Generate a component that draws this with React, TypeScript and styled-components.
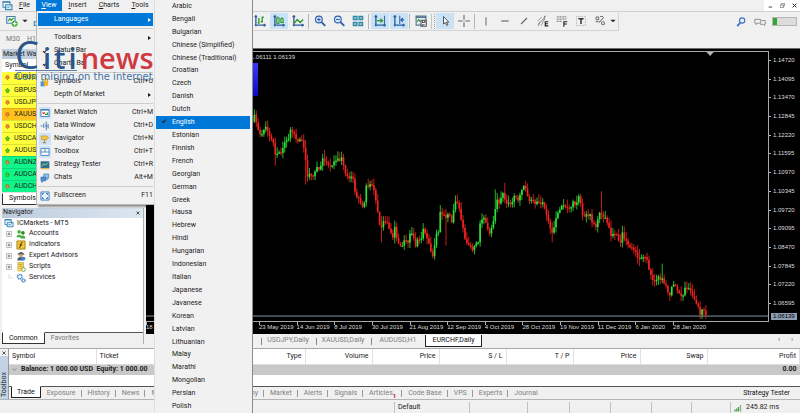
import React from "react";
import styled, { createGlobalStyle, css } from "styled-components";

const UI = `Roboto, "Open Sans", sans-serif`;
const TICK = `"Liberation Sans Narrow", "Liberation Sans", sans-serif`;

const Global = createGlobalStyle`
  *, *::before, *::after { box-sizing: border-box; }
  body { margin: 0; background: #f0f0f0; font: 7px/9px ${UI}; color: #1b1b1b; overflow: hidden; }
  button, input { font: inherit; color: inherit; }
  ul { list-style: none; margin: 0; padding: 0; }
`;

const plainButton = css`
  border: 0;
  margin: 0;
  padding: 0;
  background: transparent;
`;

const Window = styled.div`
  position: relative;
  min-height: 100vh;
  display: flex;
  flex-direction: column;
`;

/* ---------- menu bar ---------- */
const MenuBar = styled.nav`
  display: flex;
  align-items: stretch;
  height: 12px;
  padding-left: 2px;
  border-bottom: 1px solid #cfcfcf;
`;
const AppIcon = styled.span`
  width: 11px;
  height: 11px;
  svg { display: block; width: 11px; height: 11px; }
`;
const MenuButton = styled.button<{ $active?: boolean; $width: number }>`
  ${plainButton}
  width: ${(p) => p.$width}px;
  background: ${(p) => (p.$active ? "#0078d7" : "transparent")};
  color: ${(p) => (p.$active ? "#fff" : "#1b1b1b")};
  &::first-letter { text-decoration: underline; }
`;
const WindowControls = styled.div`
  display: flex;
  margin-left: auto;
  background: #fff;
`;
const WindowControl = styled.button`
  ${plainButton}
  width: 12px;
  display: grid;
  place-items: center;
  svg { width: 5px; height: 5px; }
`;

/* ---------- tool bars ---------- */
const ToolBar = styled.div`
  display: flex;
  align-items: center;
  height: 19px;
  padding-right: 3px;
`;
const ToolGroup = styled.div<{ $width?: number }>`
  display: flex;
  align-items: center;
  gap: 1px;
  height: 18px;
  border-bottom: 1px solid #d4d4d4;
  ${(p) => (p.$width ? `width: ${p.$width}px; padding-left: 3px;` : "border-right: 1px solid #d4d4d4; padding-right: 2px;")}
`;
const ToolButton = styled.button<{ $on?: boolean; $narrow?: boolean }>`
  ${plainButton}
  width: ${(p) => (p.$narrow ? 6 : 18)}px;
  height: 16px;
  display: grid;
  place-items: center;
  background: ${(p) => (p.$on ? "#c9e2f6" : "transparent")};
  svg { width: ${(p) => (p.$narrow ? 6 : 12)}px; height: ${(p) => (p.$narrow ? 6 : 12)}px; }
`;
const ToolSep = styled.span`
  width: 2px;
  height: 15px;
  border-left: 1px solid #b4b4b4;
`;
const Grip = styled.span`
  width: 4px;
  height: 15px;
  border-left: 1px solid #c4c4c4;
  border-right: 1px dotted #9c9c9c;
`;
const ToolRight = styled.div`
  display: flex;
  align-items: center;
  margin-left: auto;
  gap: 1px;
`;
const Meter = styled.div`
  width: 25px;
  height: 9px;
  margin-left: 2px;
  border: 1px solid #b5b5b5;
  background: linear-gradient(90deg, #2fa836 0 4px, #dcdcdc 4px);
`;
const PeriodBar = styled.div`
  display: flex;
  align-items: center;
  height: 17px;
  padding-left: 6px;
  color: #777;
`;
const Period = styled.button`
  ${plainButton}
  width: 21px;
  text-align: left;
`;

/* ---------- work area ---------- */
const Work = styled.main`
  flex: 1;
  display: grid;
  grid-template-columns: 144px 1fr;
  column-gap: 2px;
  min-height: 0;
`;
const Side = styled.div`
  display: flex;
  flex-direction: column;
  padding: 1px 0 4px 2px;
`;
const PanelTitle = styled.h2`
  display: flex;
  justify-content: space-between;
  align-items: center;
  margin: 0;
  padding: 0 2px 0 1px;
  height: 10px;
  font: inherit;
  background: linear-gradient(90deg, #bccbdc, #dde7f2);
`;
const CloseButton = styled.button`
  ${plainButton}
  display: grid;
  place-items: center;
  width: 7px;
  height: 7px;
  svg { width: 4px; height: 4px; }
`;
const Quotes = styled.table`
  width: 100%;
  border-collapse: collapse;
  background: #fff;
  th { height: 13px; padding: 0 3px; font-weight: 400; text-align: left; }
  td { height: 12px; padding: 0 0 0 3px; border-bottom: 1px solid rgba(0, 0, 0, 0.12); }
`;
const QuoteRow = styled.tr<{ $tone: string }>`
  background: ${(p) => p.$tone};
`;
const QuoteCell = styled.div`
  display: flex;
  align-items: center;
  gap: 4px;
  svg { width: 5px; height: 5px; }
`;
const SideTabs = styled.div`
  display: flex;
  height: 12px;
  border-top: 1px solid #555;
  background: #f0f0f0;
`;
const SideTab = styled.button<{ $active?: boolean }>`
  ${plainButton}
  height: 12px;
  margin-top: -1px;
  padding: 0 6px;
  color: ${(p) => (p.$active ? "#111" : "#777")};
  ${(p) => p.$active && "background: #fff; border: 1px solid #333; border-top-color: #fff;"}
`;
const NavPanel = styled.section`
  flex: 1;
  display: flex;
  flex-direction: column;
  margin-top: 3px;
  border-right: 1px solid #b0b0b0;
`;
const Tree = styled.ul`
  flex: 1;
  background: #fff;
  && { padding: 0 0 0 2px; }
`;
const TreeRow = styled.li<{ $root?: boolean }>`
  display: flex;
  align-items: center;
  gap: 3px;
  height: ${(p) => (p.$root ? 11 : 10)}px;
  margin-bottom: ${(p) => (p.$root ? 0 : 1)}px;
  padding-left: ${(p) => (p.$root ? 0 : 1)}px;
  svg { width: 10px; height: 10px; flex: none; }
  svg:first-child { width: ${(p) => (p.$root ? 10 : 8)}px; }
`;

/* ---------- chart ---------- */
const ChartColumn = styled.section`
  display: flex;
  flex-direction: column;
  min-width: 0;
`;
const ChartFrame = styled.div`
  flex: 1;
  display: grid;
  grid-template: 1fr 12px / 1fr 31px;
  padding-top: 2px;
  background: #000;
  border-top: 1px solid #6a6a6a;
  color: #dcdcdc;
  font: 6px/7px ${TICK};
`;
const Plot = styled.div`
  position: relative;
  border: 1px solid #a9a9a9;
  border-left: 0;
  min-height: 0;
`;
const PlotSvg = styled.svg`
  position: absolute;
  inset: 0;
  width: 100%;
  height: 100%;
`;
const Ohlc = styled.p`
  position: absolute;
  top: 2px;
  left: 8px;
  width: 141px;
  margin: 0;
  text-align: right;
  white-space: nowrap;
`;
const TradeBox = styled.div`
  position: absolute;
  left: 8px;
  top: 11px;
  width: 104px;
  height: 33px;
  background: linear-gradient(#3a3aff, #0a0ac0);
`;
const PriceAxis = styled.ul`
  position: relative;
  display: flex;
  flex-direction: column;
  && { padding-bottom: 9px; }
`;
const PriceTick = styled.li`
  flex: 1;
  display: flex;
  align-items: center;
  gap: 2px;
  &::before { content: ""; width: 2px; height: 1px; background: #b5b5b5; }
`;
const LastPrice = styled.span`
  position: absolute;
  left: 2px;
  bottom: 2px;
  padding: 0 2px;
  background: #8b9bb0;
  color: #000;
`;
const DateAxis = styled.ul`
  grid-column: 1 / -1;
  display: grid;
  grid-template-columns: repeat(17, 1fr);
  && { padding-right: 14px; }
`;
const DateTick = styled.li`
  padding-top: 2px;
  white-space: nowrap;
  background: linear-gradient(#b5b5b5, #b5b5b5) 0 0 / 1px 3px no-repeat;
`;
const ChartTabs = styled.div`
  display: flex;
  align-items: center;
  height: 14px;
  padding: 0 4px 1px 114px;
  color: #808080;
`;
const ChartTab = styled.button<{ $active?: boolean }>`
  ${plainButton}
  height: 12px;
  ${(p) =>
    p.$active
      ? "width: 57px; background: #fff; color: #111; border: 1px solid #222; border-top: 0;"
      : "width: 55px; border-left: 1px solid transparent; background: linear-gradient(#888, #888) 0 3px / 1px 7px no-repeat;"}
`;
const ScrollButtons = styled.div`
  display: flex;
  gap: 5px;
  margin-left: auto;
  button { ${plainButton} width: 8px; line-height: 9px; color: #555; }
`;

/* ---------- toolbox ---------- */
const Toolbox = styled.section`
  display: grid;
  grid-template-columns: 8px 1fr;
  height: 52px;
  border-top: 1px solid #a8a8a8;
  border-bottom: 1px solid #b4b4b4;
`;
const ToolboxRail = styled.div`
  display: flex;
  flex-direction: column;
  align-items: center;
  background: #f0f0f0;
`;
const RailLabel = styled.span`
  flex: 1;
  width: 8px;
  padding: 2px 0;
  line-height: 8px;
  writing-mode: vertical-rl;
  transform: rotate(180deg);
  background: #c3d3e6;
`;
const ToolboxBody = styled.div`
  display: flex;
  flex-direction: column;
  min-width: 0;
  background: #fff;
  border-left: 1px solid #999;
`;
const Trades = styled.table`
  width: 100%;
  table-layout: fixed;
  border-collapse: collapse;
  th {
    height: 15px;
    padding: 0 3px;
    font-weight: 400;
    text-align: right;
    border-right: 1px solid #e2e2e2;
    border-bottom: 1px solid #dcdcdc;
  }
  th:nth-child(-n + 2) { text-align: left; }
  td { height: 11px; padding: 0 3px; background: #c8c8c8; font-weight: 700; white-space: nowrap; }
  td:last-child { text-align: right; }
`;
const Col = styled.col<{ $w?: number }>`
  ${(p) => p.$w && `width: ${p.$w}px;`}
`;
const BalanceLine = styled.span`
  display: flex;
  align-items: center;
  gap: 4px;
  svg { width: 5px; height: 5px; }
`;
const BottomTabs = styled.div`
  display: flex;
  align-items: center;
  height: 13px;
  margin-top: auto;
  padding-right: 10px;
  background: #f0f0f0;
  border-top: 1px solid #555;
  color: #808080;
`;
const BottomTab = styled.button<{ $active?: boolean; $edge?: boolean }>`
  ${plainButton}
  display: flex;
  align-items: center;
  height: 12px;
  white-space: nowrap;
  ${(p) =>
    p.$active
      ? "margin: -1px 0 0 2px; padding: 0 5px; background: #fff; color: #111; border: 1px solid #222; border-top-color: #fff;"
      : "padding: 0 6px;"}
  ${(p) =>
    !p.$active && !p.$edge && "background: linear-gradient(#999, #999) 100% 3px / 1px 7px no-repeat;"}
`;
const BottomGroup = styled.div<{ $width?: number }>`
  display: flex;
  ${(p) => p.$width && `width: ${p.$width}px; button:last-child { margin-left: auto; }`}
`;
const Badge = styled.sub`
  color: #c8102e;
  font-size: 6px;
  font-weight: 700;
  line-height: 6px;
  align-self: flex-end;
`;
const TesterButton = styled.button`
  ${plainButton}
  margin-left: auto;
  color: #111;
`;

/* ---------- status bar ---------- */
const StatusBar = styled.footer`
  display: grid;
  grid-template-columns: 394px 75px 58px 42px 41px 41px 40px 39px 1fr;
  height: 13px;
  padding-top: 2px;
`;
const StatusCell = styled.div`
  display: flex;
  align-items: center;
  gap: 4px;
  padding-left: 3px;
  & + & { border-left: 1px solid #c0c0c0; }
  svg { width: 8px; height: 8px; }
`;

/* ---------- drop-down menus ---------- */
const menuSurface = css`
  position: absolute;
  background: #f1f1f1;
  z-index: 2;
`;
const ViewMenu = styled.div`
  ${menuSurface}
  left: 36px;
  top: 11px;
  width: 119px;
  padding: 2px 1px;
  border: 1px solid #b5b5b5;
  border-top: 0;
  box-shadow: 2px 2px 2px rgba(0, 0, 0, 0.4);
`;
const ViewItem = styled.button<{ $active?: boolean }>`
  ${plainButton}
  display: grid;
  grid-template-columns: 16px 1fr auto;
  align-items: center;
  width: 100%;
  height: 13px;
  text-align: left;
  background: ${(p) => (p.$active ? "#0078d7" : "transparent")};
  color: ${(p) => (p.$active ? "#fff" : "#1b1b1b")};
`;
const ItemIcon = styled.span<{ $framed?: boolean }>`
  display: grid;
  place-items: center;
  width: 12px;
  height: 12px;
  margin-left: 1px;
  background: ${(p) => (p.$framed ? "#cfe5f7" : "transparent")};
  svg { width: 10px; height: 10px; }
`;
const CheckIcon = styled.span`
  display: grid;
  place-items: center;
  width: 12px;
  margin-left: 1px;
  svg { width: 6px; height: 6px; }
`;
const Arrow = styled.span`
  width: 0;
  height: 0;
  margin-right: 2px;
  border: 2px solid transparent;
  border-left: 3px solid currentColor;
  border-right: 0;
`;
const MenuRule = styled.hr`
  height: 1px;
  margin: 2px 0;
  border: 0;
  background: #cdcdcd;
`;
const LanguageMenu = styled.div`
  ${menuSurface}
  left: 154px;
  top: 0;
  bottom: 0;
  width: 99px;
  display: flex;
  flex-direction: column;
  padding: 0 2px 0 1px;
  border-left: 1px solid #dcdcdc;
  border-right: 1px solid #8c8c8c;
`;
const LanguageItem = styled.button<{ $active?: boolean }>`
  ${plainButton}
  flex: 1;
  display: grid;
  grid-template-columns: 16px 1fr;
  align-items: center;
  text-align: left;
  white-space: nowrap;
  background: ${(p) => (p.$active ? "#0078d7" : "transparent")};
  color: ${(p) => (p.$active ? "#fff" : "#1b1b1b")};
  svg { width: 6px; height: 6px; margin-left: 5px; }
`;

/* ---------- site mark ---------- */
const Mark = styled.div`
  position: absolute;
  z-index: 3;
  left: 15px;
  top: 38px;
  width: 142px;
  pointer-events: none;
  font-family: "Open Sans", sans-serif;
`;
const MarkName = styled.div`
  display: flex;
  align-items: baseline;
  height: 32px;
  font-size: 29px;
  line-height: 32px;
  font-weight: 600;
  color: #cf3a42;
`;
const MarkInitial = styled.span`
  width: 28px;
  font: 500 38px/32px "Open Sans", sans-serif;
  color: #2a5689;
`;
const MarkStem = styled.span`
  display: flex;
  gap: 3px;
  margin-right: 4px;
  color: #2a5689;
`;
const MarkLine = styled.div`
  width: 62px;
  height: 1px;
  background: #5f83ab;
`;
const MarkTag = styled.div`
  height: 10px;
  font: 10px/12px "DejaVu Sans", sans-serif;
  white-space: nowrap;
  color: #4472a4;
`;

/* ---------- icons ---------- */
type Draw = { children: React.ReactNode };
const Ico = ({ children }: Draw) => (
  <svg viewBox="0 0 16 16" fill="none" strokeWidth="1.5" aria-hidden="true">{children}</svg>
);
const axes = <path d="M2.500 1v14M1 13.500h14M1 3l1.500-2L4 3M13 12l2 1.500L13 15" stroke="#2f5f9c" strokeWidth="1.800" />;

const icons: Record<string, React.ReactNode> = {
  bars: <Ico>{axes}<path d="M6.500 4v8M5 10h1.500M11 2v8M11 3h2M9 9h2" stroke="#2a9a2a" strokeWidth="1.800" /></Ico>,
  candles: <Ico>{axes}<path d="M5 4h3v7H5zM10.500 5h3v5h-3zM6.500 2v2M6.500 11v1M12 3v2" stroke="#2a9a2a" /></Ico>,
  line: <Ico>{axes}<path d="M3 11l4-5 4 4 4-4" stroke="#2a9a2a" strokeWidth="1.800" /></Ico>,
  zoomIn: <Ico><circle cx="6.500" cy="6" r="4.500" stroke="#2f5fae" fill="#dcebfa" /><path d="M4 6h5M6.500 3.500v5" stroke="#2f5fae" /><path d="M10 9.500l5 5" stroke="#2f5fae" strokeWidth="2.500" /></Ico>,
  zoomOut: <Ico><circle cx="6.500" cy="6" r="4.500" stroke="#2f5fae" fill="#dcebfa" /><path d="M4 6h5" stroke="#2f5fae" /><path d="M10 9.500l5 5" stroke="#2f5fae" strokeWidth="2.500" /></Ico>,
  tile: <Ico><path d="M1 1h6.500v6H1zM8.500 1H15v6H8.500zM1 9h6.500v6H1zM8.500 9H15v6H8.500z" fill="#2e86a8" /><path d="M2.500 4h3.500M10 4h3.500M2.500 12h3.500M10 12h3.500" stroke="#d8f5dc" /></Ico>,
  scroll: <Ico>{axes}<path d="M14 1v11" stroke="#3b6ea5" /><path d="M4 7.500h7M8.500 5l3 2.500-3 2.500" stroke="#2a9a2a" /></Ico>,
  shift: <Ico>{axes}<path d="M9 1v11" stroke="#3b6ea5" /><path d="M15 6.500h-4M13 4l-2.500 2.500L13 9" stroke="#2f5fae" /></Ico>,
  template: <Ico><path d="M1.500 1.500h13v12h-13z" stroke="#55778f" fill="#e6eef2" /><path d="M1 3h14" stroke="#55778f" strokeWidth="2" /><path d="M3 9l2-3 2 3" stroke="#2a9a2a" /><path d="M8 7h7v8H8z" fill="#fff" stroke="#555" /><path d="M10 7v3h3V7M10 15v-2h3" stroke="#555" /></Ico>,
  cursor: <Ico><path d="M6 2v10l2.500-2 2 4 1.500-1-2-3.500h3z" fill="#fff" stroke="#444" strokeWidth="1.200" /></Ico>,
  cross: <Ico><path d="M8 0v6M8 10v6M0 8h6M10 8h6" stroke="#666" /><circle cx="8" cy="8" r=".8" fill="#666" /></Ico>,
  vline: <Ico><path d="M8 3v11" stroke="#777" /></Ico>,
  hline: <Ico><path d="M3 8h10" stroke="#666" /></Ico>,
  trend: <Ico><path d="M4 12L12 4" stroke="#666" /></Ico>,
  elliott: <Ico><path d="M1 8l5-5M1 13L12 1M2 15l2-6M6 14l3-8M10 1v6" stroke="#777" strokeWidth="1" /><path d="M15 9h-4v5.500h4M11 11.700h3.500" stroke="#222" /></Ico>,
  fibo: <Ico><path d="M1 2.500h13M1 5.500h13M1 8.500h7" stroke="#888" strokeDasharray="1.500 .6" /><path d="M10.500 15.500V9H15M10.500 12h4" stroke="#222" /></Ico>,
  text: <Ico><path d="M2 2h12v12H2z" stroke="#999" strokeDasharray="1 1" strokeWidth="1" /><path d="M4.500 5h7M8 5v7" stroke="#333" strokeWidth="2" /></Ico>,
  shapes: <Ico><circle cx="4.500" cy="4.500" r="2" stroke="#777" /><path d="M7 10l6-7M8 2h4M2 9l6 0" stroke="#777" /><circle cx="12" cy="11" r="2" stroke="#777" /></Ico>,
  caret: <svg viewBox="0 0 14 14" aria-hidden="true"><path d="M1 4h12l-6 6z" fill="#222" /></svg>,
  newChart: <Ico><path d="M1 2h11v9H1z" fill="#eef6fb" stroke="#477fa8" /><path d="M3 8l2-3 2 2 3-3" stroke="#2a9a2a" /><circle cx="11.500" cy="11.500" r="4" fill="#3cae3c" /><path d="M9 11.500h5M11.500 9v5" stroke="#fff" /></Ico>,
  profiles: <Ico><path d="M3 9h10v5H3zM5 3h6v6" stroke="#3f86b8" fill="#cfe6f4" /><path d="M8 12V6l-3 3" stroke="#2a9a2a" /></Ico>,
  search: <Ico><circle cx="9.500" cy="6" r="3.500" stroke="#3f6fc4" /><path d="M7 9L3 13.500" stroke="#3f6fc4" strokeWidth="2.500" /></Ico>,
  chat: <Ico><path d="M1 4.500h8v5H5l-2 2v-2H1zM10 6h5v5h-1v2l-2-2H8" stroke="#8a8a8a" strokeWidth="1.200" strokeLinejoin="round" /></Ico>,
  symbols: <Ico><path d="M1 7h7v8H1z" fill="#4b8fd6" /><path d="M6 6h7v8H6z" fill="#f0b429" /><path d="M8 6V3h4v3" stroke="#b8860b" /><path d="M3 3h3v3H3z" fill="#58b058" /></Ico>,
  watch: <Ico><path d="M1.500 2.500h13v11h-13z" fill="#fff" stroke="#3f79b5" /><path d="M1 3h14" stroke="#3f79b5" strokeWidth="2" /><path d="M4 7l2 2 2-2" stroke="#d03a3a" strokeWidth="2" /><path d="M8 10h4V7" stroke="#2a9a2a" strokeWidth="2" /></Ico>,
  data: <Ico><path d="M1 8h3M6 4v7M10 1v14M13 5v7" stroke="#3f79b5" /><path d="M8 8h4" stroke="#3f79b5" /></Ico>,
  navigator: <Ico><path d="M2 3h9l3 3-3 3H2z" fill="#f4c542" stroke="#c08a1a" strokeWidth="1" /><path d="M7 9v5M4 14h6" stroke="#a08040" /></Ico>,
  toolbox: <Ico><path d="M1.500 2.500h13v11h-13z" fill="#fff" stroke="#4a86bd" /><path d="M1 8h14M8 3v5" stroke="#4a86bd" /></Ico>,
  tester: <Ico><path d="M1 2h14v11H1z" fill="#2f6d8c" /><path d="M3 10l3-4 3 2 4-4" stroke="#9be08a" /><path d="M1 14h14" stroke="#d8a62a" /></Ico>,
  chats: <Ico><path d="M6 1.500h8v7h-2v2l-2.500-2H6z" fill="#8ac0ea" stroke="#3f79b5" strokeWidth="1" /><path d="M1.500 6.500h8v6H6l-3 2.500v-2.500H1.500z" fill="#4a90d0" stroke="#2f69a5" strokeWidth="1" /></Ico>,
  full: <Ico><path d="M1.500 1.500h13v13h-13z" fill="#e4f1fb" stroke="#3f79b5" /><path d="M4 6V4h2M10 4h2v2M12 10v2h-2M6 12H4v-2" stroke="#1f5f9f" /></Ico>,
  check: <Ico><path d="M3 8.500l3.500 4L13 4" stroke="#222" strokeWidth="3" /></Ico>,
  app: <Ico><path d="M1.500 2.500h10v8h-10z" fill="#fff" stroke="#3f86b8" /><path d="M1 3h11" stroke="#3f86b8" strokeWidth="2" /><path d="M5 7h9.500v7H5z" fill="#d7ecf9" stroke="#3f86b8" /><path d="M6 12l2-2 2 1 3-3" stroke="#2a7ab0" strokeWidth="1" /></Ico>,
  accounts: <Ico><circle cx="5" cy="4.500" r="3" fill="#4db43c" /><circle cx="11" cy="6" r="3" fill="#2f8f2a" /><path d="M1 13c0-5 8-5 8 0zM7 15c0-6 8-6 8 0z" fill="#45a838" /></Ico>,
  indicators: <Ico><path d="M1.500 1.500h13v13h-13z" fill="#f3c63a" stroke="#a9821b" /><path d="M10.500 4C8 3.500 8 5 7.500 8S7 12.500 5 12M5.500 8h4.500" stroke="#4a3600" /></Ico>,
  experts: <Ico><path d="M2 5l6-4 6 4-6 2z" fill="#3a4a5c" /><circle cx="8" cy="7" r="3" fill="#d9a066" /><path d="M2 15c0-7 10-7 10 0z" fill="#49617a" /><circle cx="12" cy="12" r="3" fill="#3f86d0" /></Ico>,
  scripts: <Ico><path d="M3 1h9v10H3z" fill="#f6d860" stroke="#b8921e" strokeWidth="1" /><path d="M5 4h5M5 7h5" stroke="#a88418" strokeWidth="1" /><path d="M2 12h7v3H2z" fill="#f0c63c" /><circle cx="12" cy="12" r="3" fill="#fff" stroke="#7a9a3a" /></Ico>,
  services: <Ico><circle cx="6" cy="6" r="3.500" stroke="#3f86d0" strokeWidth="2.500" strokeDasharray="2 .8" /><circle cx="12" cy="12" r="2.500" stroke="#2f69b5" strokeWidth="2" strokeDasharray="1.500 .6" /></Ico>,
  plus: <Ico><path d="M3 3h10v10H3z" stroke="#aaa" fill="#fff" /><path d="M5 8h6M8 5v6" stroke="#555" /></Ico>,
  leaf: <Ico><path d="M8 0v8h8" stroke="#bbb" strokeWidth="1" /></Ico>,
  close: <Ico><path d="M2 2l12 12M14 2L2 14" stroke="#222" strokeWidth="3" /></Ico>,
  chevron: <Ico><path d="M2 5l6 6 6-6" stroke="#666" strokeWidth="2" /></Ico>,
  minimize: <Ico><path d="M2 13h11" stroke="#444" strokeWidth="3" /></Ico>,
  restore: <Ico><path d="M5 5V1h10v8h-4M1 6h10v9H1z" stroke="#555" strokeWidth="2" /></Ico>,
  signal: <Ico><path d="M2 15v-4M5.500 15V9M9 15V6" stroke="#3aa03a" strokeWidth="2.500" /><path d="M13 15V2" stroke="#9a9a9a" strokeWidth="2.500" /></Ico>,
};
const Direction = ({ up }: { up: boolean }) => (
  <Ico>
    <path d={up ? "M8 1l7 7h-3.500v6h-7V8H1z" : "M8 15L1 8h3.500V2h7v6H15z"} fill={up ? "#4fd21c" : "#f08a3c"} stroke={up ? "#2f8f12" : "#c2551a"} strokeWidth="2" />
  </Ico>
);

/* ---------- data ---------- */
const languages = [
  "Arabic", "Bengali", "Bulgarian", "Chinese (Simplified)", "Chinese (Traditional)", "Croatian", "Czech", "Danish",
  "Dutch", "English", "Estonian", "Finnish", "French", "Georgian", "German", "Greek", "Hausa", "Hebrew", "Hindi",
  "Hungarian", "Indonesian", "Italian", "Japanese", "Javanese", "Korean", "Latvian", "Lithuanian", "Malay",
  "Marathi", "Mongolian", "Persian", "Polish",
];

type Entry = { label: string; icon?: string; keys?: string; sub?: boolean; active?: boolean; framed?: boolean; checked?: boolean };
const viewMenu: Entry[][] = [
  [{ label: "Languages", sub: true, active: true }],
  [{ label: "Toolbars", sub: true }, { label: "Status Bar", checked: true }, { label: "Charts Bar", checked: true }],
  [{ label: "Symbols", icon: "symbols", keys: "Ctrl+U" }, { label: "Depth Of Market", sub: true }],
  [
    { label: "Market Watch", icon: "watch", keys: "Ctrl+M", framed: true },
    { label: "Data Window", icon: "data", keys: "Ctrl+D" },
    { label: "Navigator", icon: "navigator", keys: "Ctrl+N", framed: true },
    { label: "Toolbox", icon: "toolbox", keys: "Ctrl+T", framed: true },
    { label: "Strategy Tester", icon: "tester", keys: "Ctrl+R" },
    { label: "Chats", icon: "chats", keys: "Alt+M" },
  ],
  [{ label: "Fullscreen", icon: "full", keys: "F11" }],
];

const YELLOW = "#ffff3c";
const GOLD = "#ffc21a";
const GREEN = "#10f58a";
const quotes: [string, boolean, string][] = [
  ["EURUSD", false, YELLOW], ["GBPUSD", true, YELLOW], ["USDJPY", false, YELLOW], ["XAUUSD", false, GOLD],
  ["USDCHF", false, YELLOW], ["USDCAD", true, YELLOW], ["AUDUSD", true, YELLOW], ["AUDNZD", false, GREEN],
  ["AUDCAD", true, GREEN], ["AUDCHF", false, GREEN],
];

const navigatorTree = [
  ["Accounts", "accounts"], ["Indicators", "indicators"], ["Expert Advisors", "experts"], ["Scripts", "scripts"], ["Services", "services"],
];

const prices = [
  "1.14720", "1.14095", "1.13470", "1.12845", "1.12220", "1.11595", "1.10970", "1.10345", "1.09720", "1.09095",
  "1.08470", "1.07845", "1.07220", "1.06595",
];
const dates = [
  "18 Mar 2019", "9 Apr 2019", "1 May 2019", "23 May 2019", "14 Jun 2019", "8 Jul 2019", "30 Jul 2019", "21 Aug 2019",
  "12 Sep 2019", "4 Oct 2019", "28 Oct 2019", "19 Nov 2019", "11 Dec 2019", "6 Jan 2020", "28 Jan 2020",
];

/* Turning points of the daily closes: [x, y] in plot units. */
const closes: [number, number][] = [
  [2, 70], [14, 48], [22, 75], [28, 105], [38, 100], [48, 82], [58, 100], [68, 120], [76, 158], [88, 158], [98, 150],
  [104, 125], [114, 122], [122, 88], [132, 98], [142, 130], [150, 118], [158, 130], [166, 165], [172, 228], [178, 218],
  [186, 232], [194, 230], [200, 200], [210, 205], [218, 175], [228, 185], [236, 190], [246, 205], [254, 180],
  [264, 178], [272, 185], [278, 172], [284, 220], [294, 235], [304, 230], [312, 240], [318, 290], [328, 300],
  [336, 325], [343, 330], [348, 265], [356, 258], [368, 262], [374, 280], [382, 320], [388, 375], [396, 388],
  [402, 365], [412, 372], [420, 400], [430, 415], [436, 385], [442, 420], [450, 450], [460, 435], [466, 420],
  [474, 440], [482, 405], [490, 405], [498, 445], [506, 415], [514, 420], [522, 390], [530, 410], [538, 430],
  [546, 465], [553, 470], [558, 410], [566, 408], [571, 342], [580, 340], [588, 365], [594, 345], [602, 345],
  [608, 380], [614, 310], [622, 298], [630, 335], [638, 375], [646, 425], [654, 435], [664, 445], [672, 452],
  [680, 425], [688, 435], [692, 370], [700, 350], [708, 375], [716, 390], [722, 412], [730, 370], [738, 330],
  [742, 300], [750, 310], [758, 280], [766, 300], [776, 315], [786, 310], [796, 290], [806, 300], [818, 265],
  [828, 262], [838, 300], [848, 300], [858, 310], [870, 315], [880, 308], [890, 335], [898, 370], [906, 405],
  [912, 400], [916, 365], [926, 345], [934, 325], [944, 318], [954, 322], [962, 330], [970, 312], [980, 315],
  [988, 285], [996, 320], [1002, 362], [1012, 345], [1022, 345], [1030, 370], [1040, 382], [1048, 345], [1058, 350],
  [1068, 352], [1078, 385], [1086, 412], [1096, 405], [1106, 415], [1114, 430], [1120, 400], [1128, 425],
  [1138, 440], [1148, 450], [1156, 455], [1166, 475], [1176, 480], [1186, 465], [1194, 485], [1200, 520],
  [1208, 540], [1220, 545], [1230, 535], [1240, 545], [1248, 555], [1256, 580], [1264, 595], [1270, 550],
  [1280, 565], [1290, 590], [1300, 595], [1306, 570], [1316, 565], [1324, 575], [1332, 600], [1342, 615],
  [1350, 635], [1354, 655], [1359, 632], [1366, 640], [1374, 655],
];
/* Days with an unusually long wick: x, high, low. */
const wicks: [number, number, number][] = [
  [76, 130, 198], [166, 120, 255], [224, 150, 190], [394, 350, 430], [590, 330, 440], [738, 270, 335], [766, 250, 300],
  [908, 370, 430], [1055, 275, 360], [1168, 450, 503], [1238, 495, 550],
];

const STEP = 5.7;
const closeAt = (x: number) => {
  const i = Math.max(1, closes.findIndex(([cx]) => cx >= x));
  const [x0, y0] = closes[i - 1];
  const [x1, y1] = closes[i];
  return y0 + ((y1 - y0) * (x - x0)) / (x1 - x0);
};
const noise = (n: number) => {
  const v = Math.sin(n * 12.9898) * 43758.5453;
  return v - Math.floor(v);
};
const candles = Array.from({ length: 240 }, (_, n) => {
  const x = 8 + n * STEP;
  const open = closeAt(x - STEP) + (noise(n) - 0.5) * 12;
  const close = closeAt(x) + (noise(n + 1) - 0.5) * 12;
  let high = Math.min(open, close) - noise(n + 400) * 22;
  let low = Math.max(open, close) + noise(n + 900) * 18;
  for (const [wx, wh, wl] of wicks) {
    if (Math.abs(wx - x) < STEP / 2) {
      high = Math.min(high, wh);
      low = Math.max(low, wl);
    }
  }
  return { x, open, close, high, low };
});

const Candles = () => (
  <PlotSvg viewBox="-312 -147 1869 816" preserveAspectRatio="none" role="img" aria-label="EURCHF daily candles">
    <path d="M1372 -147h22l-11 12z" fill="#b5b5b5" />
    <path d="M-312 654H1557" stroke="#8593a3" strokeWidth="3" />
    {candles.map((c) => {
      const color = c.close < c.open ? "#2ee03a" : "#f02420";
      return (
        <g key={c.x} fill={color}>
          <rect x={c.x - 1.5} y={c.high} width="3" height={c.low - c.high} opacity="0.8" />
          <rect x={c.x - 2.5} y={Math.min(c.open, c.close)} width="5" height={Math.max(4, Math.abs(c.open - c.close))} />
        </g>
      );
    })}
  </PlotSvg>
);

const Tool = ({ name, label, on, narrow }: { name: string; label: string; on?: boolean; narrow?: boolean }) => (
  <ToolButton type="button" aria-label={label} $on={on} $narrow={narrow}>{icons[name]}</ToolButton>
);

export default function App() {
  return (
    <>
      <Global />
      <Window>
        <MenuBar aria-label="Main menu">
          <AppIcon>{icons.app}</AppIcon>
          <MenuButton type="button" $width={23}>File</MenuButton>
          <MenuButton type="button" $width={26} $active>View</MenuButton>
          <MenuButton type="button" $width={31}>Insert</MenuButton>
          <MenuButton type="button" $width={32}>Charts</MenuButton>
          <MenuButton type="button" $width={30}>Tools</MenuButton>
          <WindowControls>
            <WindowControl type="button" aria-label="Minimize">{icons.minimize}</WindowControl>
            <WindowControl type="button" aria-label="Restore">{icons.restore}</WindowControl>
            <WindowControl type="button" aria-label="Close">{icons.close}</WindowControl>
          </WindowControls>
        </MenuBar>

        <ToolBar>
          <ToolGroup $width={251}>
            <Tool name="newChart" label="New chart" />
            <Tool name="caret" label="More charts" narrow />
            <Tool name="profiles" label="Profiles" />
          </ToolGroup>
          <ToolGroup>
            <Tool name="bars" label="Bar chart" />
            <Tool name="candles" label="Candlesticks" on />
            <Tool name="line" label="Line chart" />
            <ToolSep />
            <Tool name="zoomIn" label="Zoom in" />
            <Tool name="zoomOut" label="Zoom out" />
            <Tool name="tile" label="Tile windows" />
            <ToolSep />
            <Tool name="scroll" label="Auto scroll" on />
            <Tool name="shift" label="Chart shift" on />
            <ToolSep />
            <Tool name="template" label="Templates" />
            <Grip />
            <Tool name="cursor" label="Cursor" on />
            <Tool name="cross" label="Crosshair" />
            <ToolSep />
            <Tool name="vline" label="Vertical line" />
            <Tool name="hline" label="Horizontal line" />
            <Tool name="trend" label="Trendline" />
            <Tool name="elliott" label="Channel" />
            <Tool name="fibo" label="Fibonacci" />
            <Tool name="text" label="Text" />
            <Tool name="shapes" label="Shapes" />
            <Tool name="caret" label="More shapes" narrow />
          </ToolGroup>
          <ToolRight>
            <Tool name="search" label="Search" />
            <Tool name="chat" label="Messages" />
            <Meter />
          </ToolRight>
        </ToolBar>
        <PeriodBar>
          <Period type="button">M30</Period>
          <Period type="button">H1</Period>
        </PeriodBar>

        <Work>
          <Side>
            <section>
              <PanelTitle>Market Watch</PanelTitle>
              <Quotes>
                <thead><tr><th>Symbol</th></tr></thead>
                <tbody>
                  {quotes.map(([name, up, tone]) => (
                    <QuoteRow key={name} $tone={tone}>
                      <td><QuoteCell><Direction up={up} />{name}</QuoteCell></td>
                    </QuoteRow>
                  ))}
                </tbody>
              </Quotes>
              <SideTabs><SideTab type="button" $active>Symbols</SideTab></SideTabs>
            </section>
            <NavPanel>
              <PanelTitle>
                Navigator
                <CloseButton type="button" aria-label="Close navigator">{icons.close}</CloseButton>
              </PanelTitle>
              <Tree>
                <TreeRow $root>{icons.app}ICMarkets - MT5</TreeRow>
                {navigatorTree.map(([label, icon]) => (
                  <TreeRow key={label}>{icons[icon === "services" ? "leaf" : "plus"]}{icons[icon]}{label}</TreeRow>
                ))}
              </Tree>
              <SideTabs>
                <SideTab type="button" $active>Common</SideTab>
                <SideTab type="button">Favorites</SideTab>
              </SideTabs>
            </NavPanel>
          </Side>

          <ChartColumn>
            <ChartFrame>
              <Plot>
                <Candles />
                <Ohlc>EURCHF,Daily 1.06162 1.06178 1.06111 1.06139</Ohlc>
                <TradeBox />
              </Plot>
              <PriceAxis>
                {prices.map((p) => <PriceTick key={p}>{p}</PriceTick>)}
                <LastPrice>1.06139</LastPrice>
              </PriceAxis>
              <DateAxis>{dates.map((d) => <DateTick key={d}>{d}</DateTick>)}</DateAxis>
            </ChartFrame>
            <ChartTabs>
              <ChartTab type="button">USDJPY,Daily</ChartTab>
              <ChartTab type="button">XAUUSD,Daily</ChartTab>
              <ChartTab type="button">AUDUSD,H1</ChartTab>
              <ChartTab type="button" $active>EURCHF,Daily</ChartTab>
              <ScrollButtons>
                <button type="button" aria-label="Previous charts">‹</button>
                <button type="button" aria-label="Next charts">›</button>
              </ScrollButtons>
            </ChartTabs>
          </ChartColumn>
        </Work>

        <Toolbox>
          <ToolboxRail>
            <CloseButton type="button" aria-label="Close toolbox">{icons.close}</CloseButton>
            <RailLabel>Toolbox</RailLabel>
          </ToolboxRail>
          <ToolboxBody>
            <Trades>
              <colgroup>
                <Col $w={87} /><Col $w={138} /><Col $w={71} /><Col $w={67} /><Col $w={67} />
                <Col $w={67} /><Col $w={67} /><Col $w={67} /><Col $w={67} /><Col />
              </colgroup>
              <thead>
                <tr>
                  {["Symbol", "Ticket", "Type", "Volume", "Price", "S / L", "T / P", "Price", "Swap", "Profit"].map((h, i) => (
                    <th key={i} scope="col">{h}</th>
                  ))}
                </tr>
              </thead>
              <tbody>
                <tr>
                  <td colSpan={9}>
                    <BalanceLine>{icons.chevron}Balance: 1 000.00 USD&nbsp; Equity: 1 000.00</BalanceLine>
                  </td>
                  <td>0.00</td>
                </tr>
              </tbody>
            </Trades>
            <BottomTabs>
              <BottomGroup $width={255}>
                <BottomTab type="button" $active>Trade</BottomTab>
                <BottomTab type="button">Exposure</BottomTab>
                <BottomTab type="button">History</BottomTab>
                <BottomTab type="button">News</BottomTab>
                <BottomTab type="button">Mailbox</BottomTab>
                <BottomTab type="button">Calendar</BottomTab>
                <BottomTab type="button">Company</BottomTab>
              </BottomGroup>
              <BottomGroup>
                <BottomTab type="button">Market</BottomTab>
                <BottomTab type="button">Alerts</BottomTab>
                <BottomTab type="button">Signals</BottomTab>
                <BottomTab type="button">Articles<Badge>1</Badge></BottomTab>
                <BottomTab type="button">Code Base</BottomTab>
                <BottomTab type="button">VPS</BottomTab>
                <BottomTab type="button">Experts</BottomTab>
                <BottomTab type="button" $edge>Journal</BottomTab>
              </BottomGroup>
              <TesterButton type="button">Strategy Tester</TesterButton>
            </BottomTabs>
          </ToolboxBody>
        </Toolbox>

        <StatusBar>
          <StatusCell />
          <StatusCell>Default</StatusCell>
          <StatusCell /><StatusCell /><StatusCell /><StatusCell /><StatusCell /><StatusCell />
          <StatusCell>{icons.signal}245.82 ms</StatusCell>
        </StatusBar>

        <ViewMenu>
          {viewMenu.map((group, g) => (
            <React.Fragment key={g}>
              {g > 0 && <MenuRule />}
              {group.map((item) => (
                <ViewItem key={item.label} type="button" $active={item.active}>
                  {item.checked
                    ? <CheckIcon>{icons.check}</CheckIcon>
                    : <ItemIcon $framed={item.framed}>{item.icon && icons[item.icon]}</ItemIcon>}
                  <span>{item.label}</span>
                  {item.sub ? <Arrow /> : <span>{item.keys}</span>}
                </ViewItem>
              ))}
            </React.Fragment>
          ))}
        </ViewMenu>

        <LanguageMenu>
          {languages.map((name) => (
            <LanguageItem key={name} type="button" $active={name === "English"}>
              <span>{name === "English" && icons.check}</span>
              {name}
            </LanguageItem>
          ))}
        </LanguageMenu>

        <Mark>
          <MarkName>
            <MarkInitial>C</MarkInitial>
            <MarkStem><span>i</span><span>t</span><span>i</span></MarkStem>
            news
          </MarkName>
          <MarkLine />
          <MarkTag>Coin mining on the internet</MarkTag>
        </Mark>
      </Window>
    </>
  );
}
